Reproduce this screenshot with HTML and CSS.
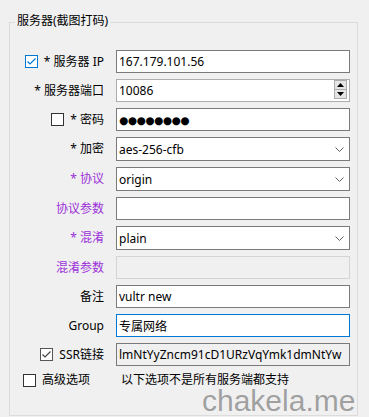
FILE: index.html
```html
<!DOCTYPE html>
<html lang="zh-CN">
<head>
  <meta charset="UTF-8">
  <title>服务器设置</title>
  <link rel="stylesheet" href="styles.css">
</head>
<body>
  <div class="group">
    <span class="legend">服务器(截图打码)</span>
    <div class="form">
      <div class="label">
        <span class="check active">
          <svg width="11" height="11" viewBox="0 0 11 11"><path d="M1.5 5.5 L4 8 L9.5 2.5" fill="none" stroke="#0078d7" stroke-width="1.2"/></svg>
        </span>
        * 服务器 IP
      </div>
      <input class="field" type="text" value="167.179.101.56">

      <div class="label">* 服务器端口</div>
      <div class="spin-field">
        <input class="field light" type="text" value="10086">
        <div class="spinner">
          <span class="spin-btn"><svg width="7" height="4" viewBox="0 0 7 4"><path d="M0 4 L3.5 0 L7 4 Z" fill="#000"/></svg></span>
          <span class="spin-btn"><svg width="7" height="4" viewBox="0 0 7 4"><path d="M0 0 L7 0 L3.5 4 Z" fill="#000"/></svg></span>
        </div>
      </div>

      <div class="label">
        <span class="check"></span>
        * 密码
      </div>
      <div class="field dots">●●●●●●●●</div>

      <div class="label">* 加密</div>
      <div class="select">
        <span>aes-256-cfb</span>
        <svg width="9" height="5" viewBox="0 0 9 5"><path d="M0.5 0.5 L4.5 4.5 L8.5 0.5" fill="none" stroke="#606060" stroke-width="1"/></svg>
      </div>

      <div class="label purple">* 协议</div>
      <div class="select">
        <span>origin</span>
        <svg width="9" height="5" viewBox="0 0 9 5"><path d="M0.5 0.5 L4.5 4.5 L8.5 0.5" fill="none" stroke="#606060" stroke-width="1"/></svg>
      </div>

      <div class="label purple">协议参数</div>
      <input class="field" type="text" value="">

      <div class="label purple">* 混淆</div>
      <div class="select">
        <span>plain</span>
        <svg width="9" height="5" viewBox="0 0 9 5"><path d="M0.5 0.5 L4.5 4.5 L8.5 0.5" fill="none" stroke="#606060" stroke-width="1"/></svg>
      </div>

      <div class="label purple">混淆参数</div>
      <input class="field disabled" type="text" value="" disabled>

      <div class="label">备注</div>
      <input class="field" type="text" value="vultr new">

      <div class="label">Group</div>
      <input class="field focused" type="text" value="专属网络">

      <div class="label">
        <span class="check muted">
          <svg width="11" height="11" viewBox="0 0 11 11"><path d="M1.5 5.5 L4 8 L9.5 2.5" fill="none" stroke="#444" stroke-width="1.2"/></svg>
        </span>
        SSR链接
      </div>
      <input class="field readonly" type="text" value="lmNtYyZncm91cD1URzVqYmk1dmNtYw" readonly>

      <div class="label left">
        <span class="check"></span>
        高级选项
      </div>
      <div class="note">以下选项不是所有服务端都支持</div>
    </div>
  </div>

  <div class="watermark">chakela.me</div>
</body>
</html>
```

FILE: styles.css
```css
body {
  margin: 0;
  background-color: #f0f0f0;
  font-family: "Noto Sans", "Noto Sans CJK SC", sans-serif;
  font-size: 12px;
  color: #000;
  position: relative;
  height: 417px;
  overflow: hidden;
}

.group {
  box-sizing: border-box;
  position: relative;
  margin: 22px 0 0 9px;
  width: 349px;
  height: 394px;
  border: 1px solid #dcdcdc;
  padding-top: 27px;
}

.legend {
  position: absolute;
  top: -10px;
  left: 5px;
  padding: 0 2px;
  line-height: 16px;
  background-color: #f0f0f0;
}

.form {
  display: grid;
  grid-template-columns: 94px 234px;
  column-gap: 12px;
  row-gap: 6px;
}

.label {
  display: flex;
  align-items: center;
  justify-content: flex-end;
  gap: 6px;
  white-space: nowrap;
  line-height: 16px;
}

.label.left {
  justify-content: flex-start;
  padding-left: 13px;
}

.purple {
  color: #9b30d9;
}

.check {
  box-sizing: border-box;
  width: 13px;
  height: 13px;
  border: 1px solid #333;
  background-color: #fff;
  display: flex;
  align-items: center;
  justify-content: center;
}

.check.active {
  border-color: #0078d7;
}

.check.muted {
  border-color: #555;
}

.field {
  box-sizing: border-box;
  width: 234px;
  height: 23px;
  margin: 0;
  border: 1px solid #7a7a7a;
  padding: 0 2px;
  background-color: #fff;
  font-family: "Noto Sans", "Noto Sans CJK SC", sans-serif;
  font-size: 12px;
  color: #000;
  outline: none;
}

.field.light {
  border-color: #adadad;
}

.field.focused {
  border-color: #0078d7;
}

.field.disabled {
  background-color: #f0f0f0;
  border-color: #d4d4d4;
}

.field.readonly {
  background-color: #f0f0f0;
}

.dots {
  display: flex;
  align-items: center;
  font-family: "DejaVu Sans", sans-serif;
  font-size: 10.5px;
  letter-spacing: -0.4px;
}

.spin-field {
  position: relative;
}

.spinner {
  position: absolute;
  top: 1px;
  right: 3px;
  display: flex;
  flex-direction: column;
}

.spin-btn {
  box-sizing: border-box;
  width: 13px;
  height: 10px;
  border: 1px solid #adadad;
  background-color: #e5e5e5;
  display: flex;
  align-items: center;
  justify-content: center;
}

.spin-btn + .spin-btn {
  margin-top: -1px;
}

.select {
  box-sizing: border-box;
  height: 24px;
  border: 1px solid #7a7a7a;
  background-color: #fff;
  padding: 0 5px 0 2px;
  display: flex;
  align-items: center;
  justify-content: space-between;
}

.note {
  padding-left: 5px;
  line-height: 16px;
}

.watermark {
  position: absolute;
  left: 202px;
  top: 390px;
  font-family: "Liberation Sans", Arial, sans-serif;
  font-size: 30px;
  line-height: 22px;
  color: #a0a0a0;
  text-shadow: 0 0 1px #fff;
}
```
